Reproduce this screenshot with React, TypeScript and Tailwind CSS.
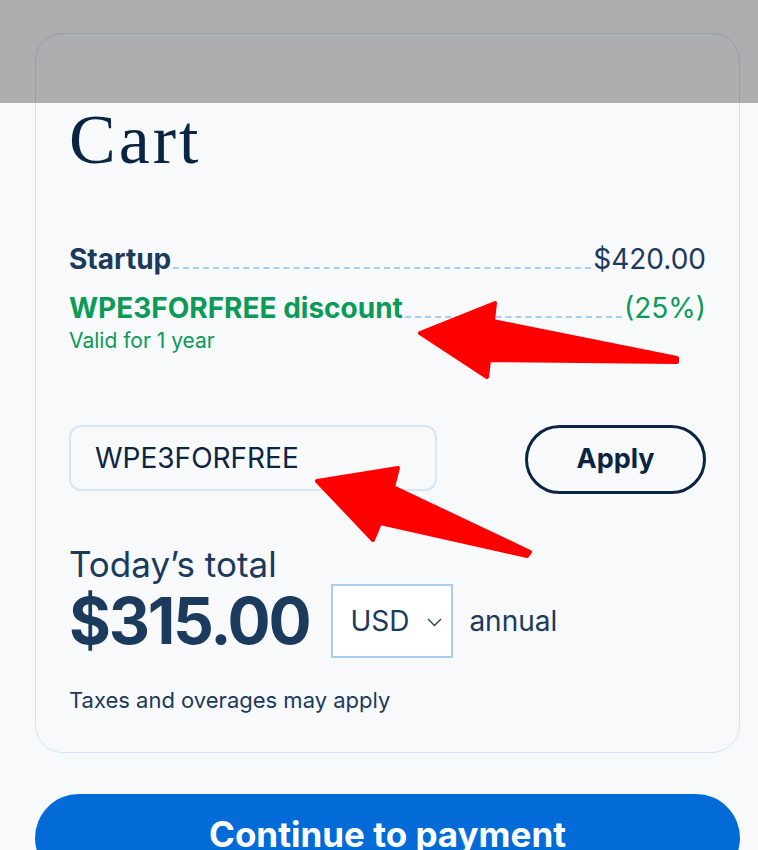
import { useState } from 'react';

const sans = "font-['Inter','Liberation_Sans',sans-serif]";

const Arrows = () => (
  <svg className="pointer-events-none absolute left-0 top-0" width="758" height="850" viewBox="0 0 758 850">
    <polygon
      points="420,333 495,303 493,321 677,358 677,362 489,360 487,377"
      fill="#ff0000"
      stroke="#ff0000"
      strokeWidth="4"
      strokeLinejoin="round"
    />
    <polygon
      points="317,481 398,468 393,487 530,552 527,556 380,523 373,540"
      fill="#ff0000"
      stroke="#ff0000"
      strokeWidth="4"
      strokeLinejoin="round"
    />
  </svg>
);

export default function App() {
  const [code, setCode] = useState('WPE3FORFREE');
  const [currency, setCurrency] = useState('USD');

  return (
    <div className={`relative h-[850px] w-[758px] overflow-hidden bg-[#f7f9fb] ${sans}`}>
      <div className="pl-[35px] pr-[18px] pt-[33px]">
        {/* カード */}
        <div className="rounded-[28px] border border-[#d3e4f6] px-[33px] pb-[38px] pt-[72px]">
          <h1 className="font-['Liberation_Serif','DejaVu_Serif',serif] text-[70px] leading-[68px] tracking-[3px] text-[#0b2441]">
            Cart
          </h1>

          <div className="mt-[69px] flex items-baseline text-[28px] leading-[32px] text-[#1b3a5c]">
            <span className="font-bold">Startup</span>
            <span className="mx-[2px] flex-1 border-b-2 border-dashed border-[#a9cdf1]" />
            <span>$420.00</span>
          </div>

          <div className="mt-[17px] flex items-baseline text-[28px] leading-[32px] text-[#0b9a57]">
            <span className="font-bold">WPE3FORFREE discount</span>
            <span className="mx-[2px] flex-1 border-b-2 border-dashed border-[#a9cdf1]" />
            <span>(25%)</span>
          </div>
          <p className="mt-[5px] text-[21px] leading-[24px] text-[#0b9a57]">Valid for 1 year</p>

          <div className="mt-[72px] flex items-start justify-between">
            <input
              value={code}
              onChange={(e) => setCode(e.target.value)}
              className="h-[66px] w-[368px] rounded-[12px] border-2 border-[#d6e6f7] bg-[#f7f9fb] px-[24px] text-[28px] text-[#0b2441] outline-none"
            />
            <button className="h-[69px] w-[181px] rounded-full border-[3px] border-[#0b2441] text-[27px] font-bold text-[#0b2441]">
              Apply
            </button>
          </div>

          <p className="mt-[52px] text-[35px] leading-[36px] text-[#1b3a5c]">Today’s total</p>
          <div className="mt-[2px] flex items-center">
            <span className="text-[64px] font-bold leading-[74px] tracking-[-0.035em] text-[#1b3a5c]">$315.00</span>
            <div className="relative ml-[22px] h-[74px] w-[122px] border-2 border-[#a9cdf1] bg-white">
              <select
                value={currency}
                onChange={(e) => setCurrency(e.target.value)}
                className="h-full w-full appearance-none bg-transparent pl-[17px] text-[28px] text-[#1b3a5c] outline-none"
              >
                <option>USD</option>
                <option>EUR</option>
                <option>GBP</option>
              </select>
              <svg className="pointer-events-none absolute right-[9px] top-[32px]" width="15" height="9" viewBox="0 0 15 9">
                <path d="M1 1l6.5 6.5L14 1" fill="none" stroke="#1b3a5c" strokeWidth="1.3" />
              </svg>
            </div>
            <span className="ml-[16px] text-[28px] text-[#1b3a5c]">annual</span>
          </div>

          <p className="mt-[28px] text-[22px] leading-[28px] text-[#1b3a5c]">Taxes and overages may apply</p>
        </div>

        <button className="mt-[41px] h-[88px] w-full rounded-full bg-[#026bd7] pb-[8px] text-[35px] font-bold text-white">
          Continue to payment
        </button>
      </div>

      {/* 上部のオーバーレイ */}
      <div className="absolute left-0 top-0 h-[103px] w-full bg-black/30" />
      <Arrows />
    </div>
  );
}
